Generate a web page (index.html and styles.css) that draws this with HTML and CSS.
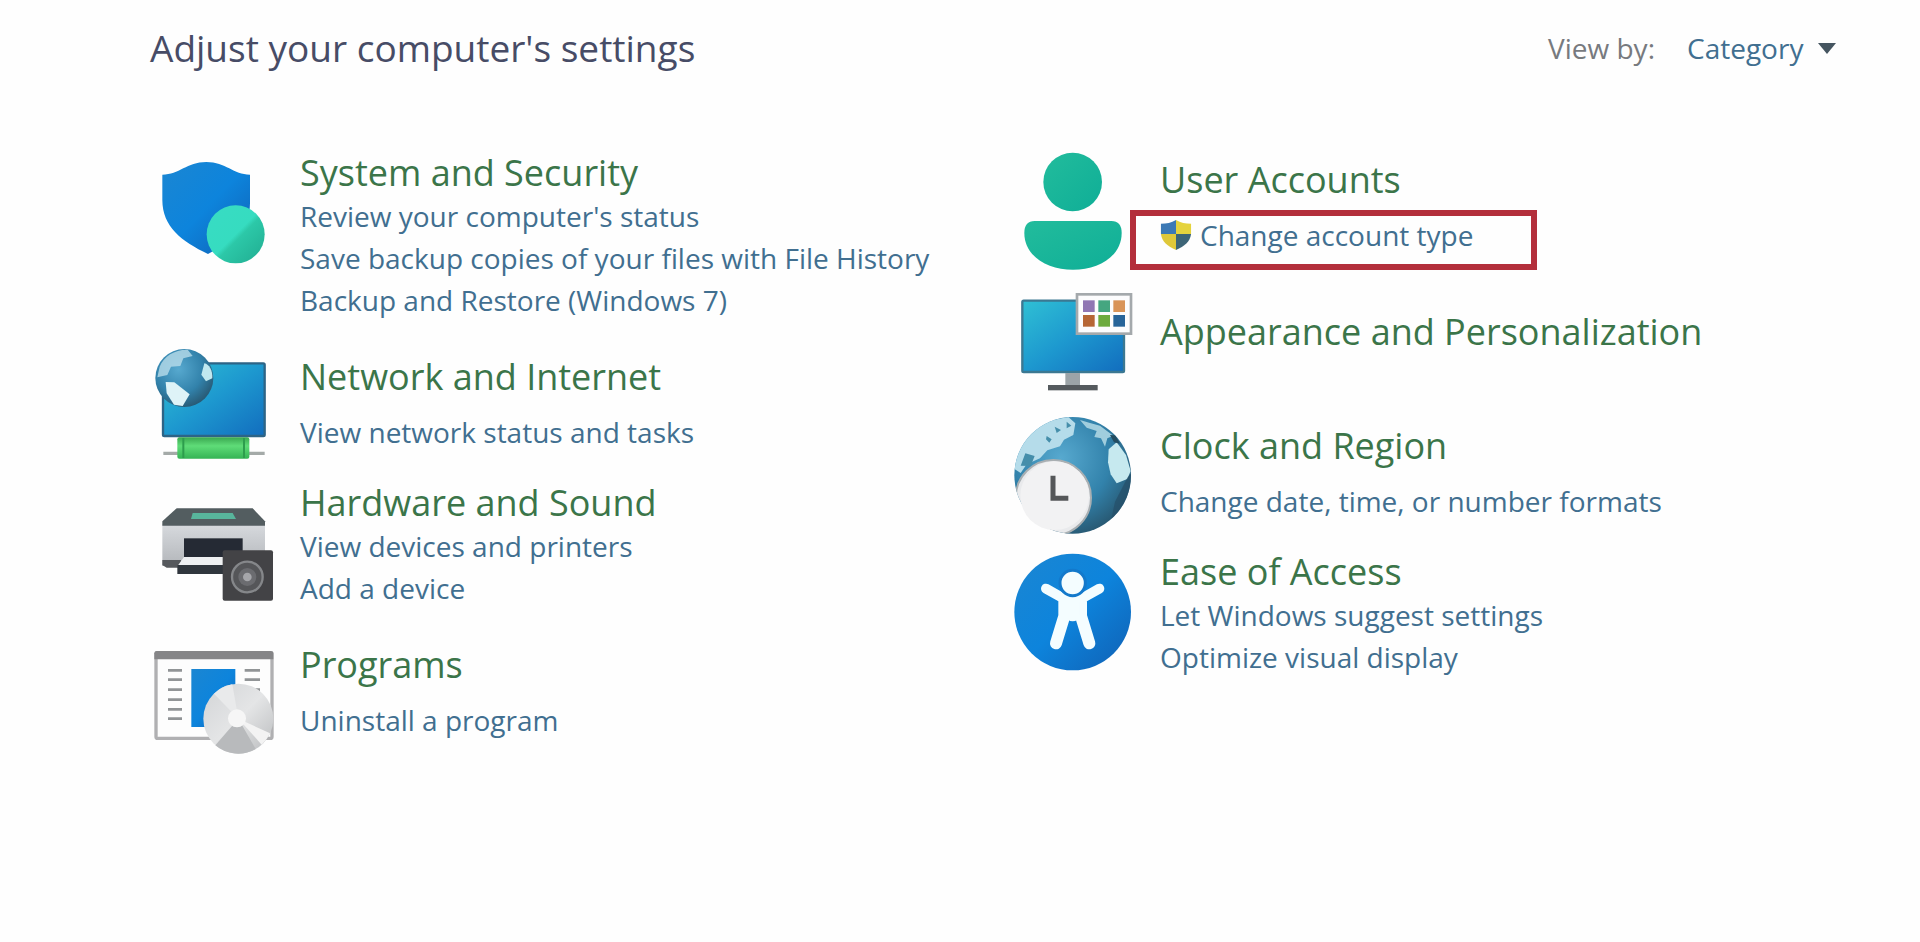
FILE: index.html
```html
<!DOCTYPE html>
<html lang="en">
<head>
<meta charset="utf-8">
<title>Control Panel</title>
<link rel="stylesheet" href="styles.css">
</head>
<body>
<svg class="defs" width="0" height="0" aria-hidden="true">
  <defs>
    <linearGradient id="blue" x1="0" y1="0" x2="1" y2="1"><stop offset="0" stop-color="#1b86d2"/><stop offset=".5" stop-color="#0d84dc"/><stop offset="1" stop-color="#1060b4"/></linearGradient>
    <linearGradient id="teal" x1="0" y1="0" x2="1" y2="1"><stop offset="0" stop-color="#38dcc4"/><stop offset=".5" stop-color="#36dcc0"/><stop offset=".56" stop-color="#2cc8a8"/><stop offset="1" stop-color="#20ab90"/></linearGradient>
    <linearGradient id="person" x1="0" y1="0" x2="1" y2="1"><stop offset="0" stop-color="#22bc9c"/><stop offset="1" stop-color="#0fae97"/></linearGradient>
    <linearGradient id="screen" x1="0" y1="0" x2="1" y2="1"><stop offset="0" stop-color="#2fc0d4"/><stop offset=".5" stop-color="#1d98cf"/><stop offset="1" stop-color="#126dbe"/></linearGradient>
    <linearGradient id="green" x1="0" y1="0" x2="0" y2="1"><stop offset="0" stop-color="#3aa850"/><stop offset=".4" stop-color="#5fdc78"/><stop offset="1" stop-color="#35b455"/></linearGradient>
    <radialGradient id="globe" cx=".4" cy=".35" r=".7"><stop offset="0" stop-color="#57a9cf"/><stop offset=".6" stop-color="#3282ab"/><stop offset="1" stop-color="#27566f"/></radialGradient>
    <linearGradient id="disc" x1="0" y1="0" x2="1" y2="1"><stop offset="0" stop-color="#d2d4d6"/><stop offset=".5" stop-color="#e4e5e6"/><stop offset="1" stop-color="#b9bbbd"/></linearGradient>
    <linearGradient id="body" x1="0" y1="0" x2="0" y2="1"><stop offset="0" stop-color="#d7dade"/><stop offset="1" stop-color="#b3b6ba"/></linearGradient>
    <clipPath id="earth"><circle cx="218" cy="211" r="175"/></clipPath>
  </defs>
</svg>

<header class="header">
  <h1 class="title">Adjust your computer's settings</h1>
  <div class="view">
    <label class="view-label" for="view">View by:</label>
    <div class="picker">
      <select class="view-select" id="view"><option>Category</option></select>
      <svg class="caret" viewBox="0 0 20 12" aria-hidden="true"><path d="M0 0H20L10 12Z" fill="#455560"/></svg>
    </div>
  </div>
</header>

<main class="columns">
  <div class="column">
    <section class="category">
      <svg class="icon" viewBox="24 33 384 384" aria-hidden="true">
        <path d="M67 104C118 104 140 66 199 66S280 104 330 104V190C330 265 270 310 204 342C125 304 67 260 67 180Z" fill="url(#blue)"/>
        <circle cx="287" cy="283" r="87" fill="url(#teal)"/>
      </svg>
      <div class="text">
        <h2 class="name"><a href="#">System and Security</a></h2>
        <ul class="links">
          <li><a href="#">Review your computer's status</a></li>
          <li><a href="#">Save backup copies of your files with File History</a></li>
          <li><a href="#">Backup and Restore (Windows 7)</a></li>
        </ul>
      </div>
    </section>

    <section class="category after-long">
      <svg class="icon" viewBox="24 45 384 384" aria-hidden="true">
        <rect x="69" y="70" width="305" height="218" rx="4" fill="url(#screen)" stroke="#2d6486" stroke-width="7"/>
        <path d="M70 340H374" stroke="#a4aaa8" stroke-width="10"/>
        <rect x="112" y="292" width="216" height="64" rx="6" fill="url(#green)"/>
        <path d="M130 294V354M312 294V354" stroke="#2d9d4d" stroke-width="6"/>
        <circle cx="133" cy="114" r="87" fill="url(#globe)"/>
        <path d="M59 80C72 48 105 28 143 29L158 48L130 55L121 78L93 80L82 105L52 112Z" fill="#b8dcea" opacity=".8"/>
        <path d="M77 126L103 127L149 163L128 198L102 194L80 160Z" fill="#def3f7"/>
        <path d="M193 70C208 73 218 91 217 115L198 124L184 104Z" fill="#c0e8ef"/>
      </svg>
      <div class="text spaced">
        <h2 class="name"><a href="#">Network and Internet</a></h2>
        <ul class="links"><li><a href="#">View network status and tasks</a></li></ul>
      </div>
    </section>

    <section class="category after-short">
      <svg class="icon" viewBox="24 -30 384 384" aria-hidden="true">
        <path d="M67 98H375V214L360 225H67Z" fill="url(#body)"/>
        <path d="M67 104V91L110 52H338L375 91V104Z" fill="#535d60"/>
        <path d="M158 66H278L288 84H153Z" fill="#58b59c"/>
        <path d="M67 207H123V230H80L67 222Z" fill="#56595d"/>
        <rect x="132" y="142" width="176" height="58" fill="#252a34"/>
        <path d="M132 198H262V226H112Z" fill="#eef0f2"/>
        <path d="M112 222H260V249H112Z" fill="#30363d"/>
        <rect x="248" y="178" width="151" height="151" rx="6" fill="#434346"/>
        <circle cx="322" cy="258" r="46" fill="#555659" stroke="#85878a" stroke-width="7"/>
        <circle cx="322" cy="258" r="27" fill="#6b6c70"/>
        <circle cx="322" cy="258" r="13" fill="#a5a6aa"/>
      </svg>
      <div class="text">
        <h2 class="name"><a href="#">Hardware and Sound</a></h2>
        <ul class="links">
          <li><a href="#">View devices and printers</a></li>
          <li><a href="#">Add a device</a></li>
        </ul>
      </div>
    </section>

    <section class="category after-long">
      <svg class="icon" viewBox="24 9 384 384" aria-hidden="true">
        <rect x="48" y="38" width="348" height="257" rx="5" fill="#fdfdfd" stroke="#b0b0b2" stroke-width="10"/>
        <path d="M43 58V40Q43 33 50 33H392Q400 33 400 40V58Z" fill="#858587"/>
        <path d="M84 91H126M84 119H126M84 149H126M84 179H126M84 208H126M84 236H126M314 91H360M314 119H360M320 149H360" stroke="#919496" stroke-width="8"/>
        <rect x="154" y="87" width="132" height="174" fill="url(#blue)"/>
        <circle cx="295" cy="236" r="105" fill="url(#disc)"/>
        <path d="M295 236L226 316A105 105 0 0 0 347 327Z" fill="#b8babc"/>
        <path d="M295 236L365 314A105 105 0 0 0 390 280Z" fill="#f3f3f3"/>
        <path d="M295 236L222 161A105 105 0 0 1 277 133Z" fill="#e9eaeb"/>
        <circle cx="291" cy="235" r="27" fill="#f6f6f6"/>
      </svg>
      <div class="text spaced">
        <h2 class="name"><a href="#">Programs</a></h2>
        <ul class="links"><li><a href="#">Uninstall a program</a></li></ul>
      </div>
    </section>
  </div>

  <div class="column column-right">
    <section class="category">
      <svg class="icon" viewBox="24 57 384 384" aria-hidden="true">
        <circle cx="218" cy="129" r="88" fill="url(#person)"/>
        <path d="M104 246H334Q365 246 365 282C365 352 296 392 219 392S73 352 73 282Q73 246 104 246Z" fill="url(#person)"/>
      </svg>
      <div class="text spaced">
        <h2 class="name"><a href="#">User Accounts</a></h2>
        <ul class="links">
          <li class="highlight"><a class="shielded" href="#">
            <svg class="uac" viewBox="0 0 34 34" aria-hidden="true">
              <path d="M17 1C12 4 7 5 1 5V16H17Z" fill="#3c79b5"/>
              <path d="M17 1C22 4 27 5 33 5V16H17Z" fill="#e5d33d"/>
              <path d="M1 16H17V33C8 29 2 24 1 16Z" fill="#dfc83a"/>
              <path d="M33 16H17V33C26 29 32 24 33 16Z" fill="#3d6577"/>
            </svg>Change account type</a></li>
        </ul>
      </div>
    </section>

    <section class="category after-user">
      <svg class="icon" viewBox="24 90 384 384" aria-hidden="true">
        <rect x="67" y="62" width="305" height="214" rx="4" fill="url(#screen)" stroke="#3b7892" stroke-width="7"/>
        <rect x="196" y="279" width="44" height="38" fill="#9ca4a8"/>
        <rect x="144" y="315" width="149" height="16" fill="#555a5e"/>
        <rect x="231" y="43" width="162" height="118" fill="#fcfcfd" stroke="#a4a9ac" stroke-width="8"/>
        <g>
          <rect x="249" y="61" width="35" height="35" fill="#9076b3"/><rect x="295" y="61" width="35" height="35" fill="#45a680"/><rect x="340" y="61" width="35" height="35" fill="#d99458"/>
          <rect x="249" y="105" width="35" height="35" fill="#b66635"/><rect x="295" y="105" width="35" height="35" fill="#6dab3e"/><rect x="340" y="105" width="35" height="35" fill="#276499"/>
        </g>
      </svg>
      <div class="text">
        <h2 class="name"><a href="#">Appearance and Personalization</a></h2>
      </div>
    </section>

    <section class="category after-single">
      <svg class="icon" viewBox="24 57 384 384" aria-hidden="true">
        <circle cx="218" cy="211" r="175" fill="url(#globe)"/>
        <g clip-path="url(#earth)">
          <path d="M40 190L60 110L130 50L205 36L226 55L220 90L192 104L180 124L142 136L120 160L80 178L62 204Z" fill="#b5dcea"/>
          <path d="M76 145L104 153L92 183L62 182ZM140 93L155 103L148 113L138 103ZM164 65L183 75L170 84ZM200 50L214 62L200 70Z" fill="#458eaa"/>
          <path d="M240 45L270 54L300 62L340 92L322 100L315 125L303 100L283 96L290 78L260 68Z" fill="#a0cddd"/>
          <path d="M326 133L350 112L378 150L392 198L382 222L350 235L332 208L324 172Z" fill="#c6e9ef"/>
          <path d="M330 90L346 91L360 116L342 112Z" fill="#234c60"/>
          <path d="M382 218L398 200V270L330 360L345 290Z" fill="#254f68" opacity=".7"/>
          <circle cx="160" cy="278" r="113" fill="#e9eaec" stroke="#a9afb2" stroke-width="6"/>
        </g>
        <circle cx="164" cy="272" r="103" fill="#f2f2f3"/>
        <path d="M159 212V280H205" fill="none" stroke="#555759" stroke-width="15"/>
      </svg>
      <div class="text spaced">
        <h2 class="name"><a href="#">Clock and Region</a></h2>
        <ul class="links"><li><a href="#">Change date, time, or number formats</a></li></ul>
      </div>
    </section>

    <section class="category after-short">
      <svg class="icon" viewBox="24 24 384 384" aria-hidden="true">
        <circle cx="218" cy="210" r="175" fill="url(#blue)"/>
        <g fill="none" stroke="#f4fdff" stroke-linecap="round" stroke-linejoin="round">
          <path d="M138 140L188 168H248L298 140" stroke-width="30"/>
          <path d="M193 180V222L168 304M243 180V222L268 304" stroke-width="36"/>
          <path d="M218 180V218" stroke-width="40"/>
        </g>
        <circle cx="218" cy="123" r="38" fill="#f4fdff" stroke="#1379cb" stroke-width="9"/>
      </svg>
      <div class="text">
        <h2 class="name"><a href="#">Ease of Access</a></h2>
        <ul class="links">
          <li><a href="#">Let Windows suggest settings</a></li>
          <li><a href="#">Optimize visual display</a></li>
        </ul>
      </div>
    </section>
  </div>
</main>
</body>
</html>
```
FILE: styles.css
```css
* { box-sizing: border-box; }

body {
  margin: 0;
  background: #fefefe;
  font-family: "Segoe UI", "Open Sans", "Noto Sans", sans-serif;
  font-size: 28px;
  line-height: 42px;
  color: #416f90;
}

h1, h2, ul { margin: 0; padding: 0; font-weight: 400; }
ul { list-style: none; }
a { color: inherit; text-decoration: none; }
a:hover { text-decoration: underline; }
.defs { position: absolute; }

.header {
  display: flex;
  justify-content: space-between;
  align-items: center;
  padding: 24px 84px 0 150px;
}
.title { font-size: 37px; line-height: 48px; color: #474c66; }
.view { display: flex; align-items: center; gap: 32px; }
.view-label { color: #777a7e; }
.picker { display: flex; align-items: center; gap: 14px; }
.view-select {
  appearance: none;
  border: 0;
  padding: 0;
  background: transparent;
  font: inherit;
  color: #416f90;
}
.caret { width: 18px; height: 11px; }

.columns {
  display: grid;
  grid-template-columns: 860fr 912fr;
  padding: 79px 0 60px 148px;
}
.column-right { padding-top: 7px; }

.category { display: flex; align-items: flex-start; gap: 24px; }
.after-long { margin-top: 34px; }
.after-short { margin-top: 28px; }
.after-user { margin-top: 54px; }
.after-single { margin-top: 70px; }

.icon { flex: none; width: 128px; height: 128px; margin-bottom: -84px; overflow: visible; }
.name { font-size: 36px; line-height: 44px; color: #3b7549; }
.spaced .links { padding-top: 12px; }

.highlight { position: relative; width: fit-content; }
.highlight::after {
  content: "";
  position: absolute;
  inset: -4px -64px -14px -30px;
  border: 6px solid #b32f3b;
  pointer-events: none;
}
.shielded { display: flex; align-items: center; gap: 8px; }
.uac { width: 32px; height: 34px; }
```
